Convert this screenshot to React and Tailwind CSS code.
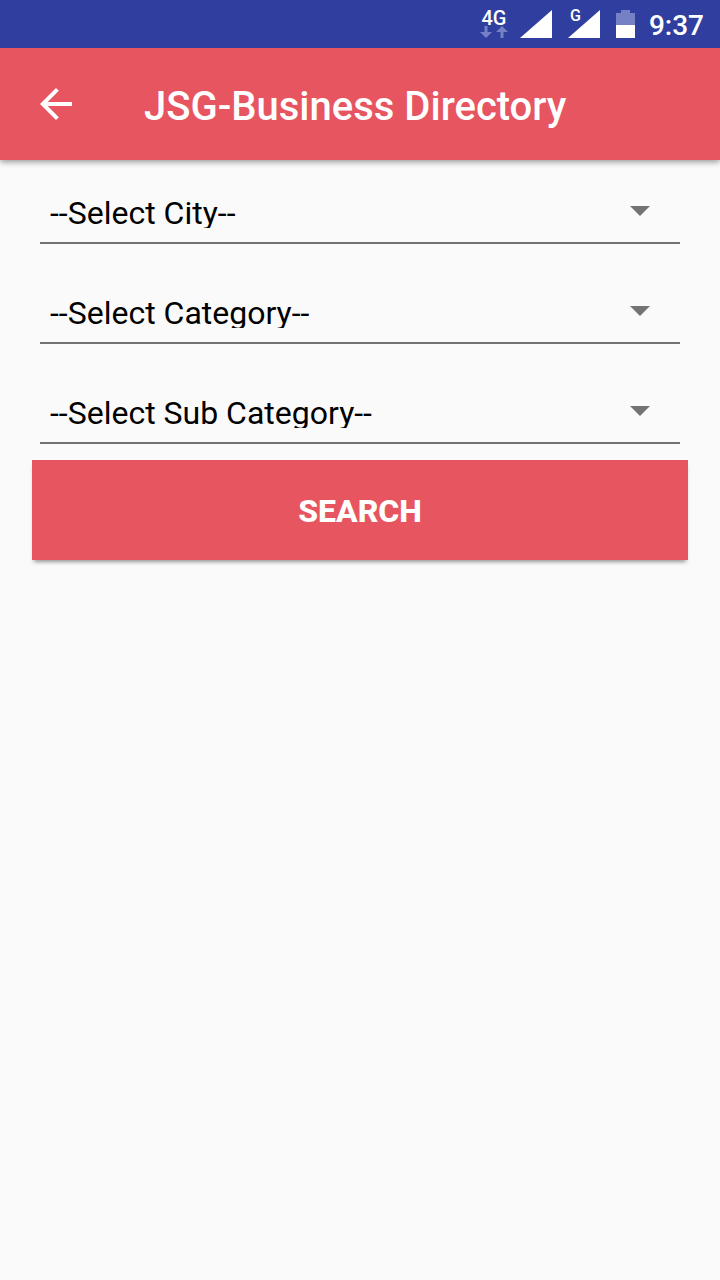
import React, { useState } from "react";

const FIELDS = [
  { id: "city", label: "City", placeholder: "--Select City--" },
  { id: "category", label: "Category", placeholder: "--Select Category--" },
  { id: "subCategory", label: "Sub category", placeholder: "--Select Sub Category--" },
];

function SignalIcon() {
  return (
    <svg className="h-7 w-8" viewBox="0 0 32 28" fill="white" aria-hidden="true">
      <path d="M32 0v28H0z" />
    </svg>
  );
}

function DataArrows() {
  return (
    <svg className="h-3 w-7" viewBox="0 0 28 12" fill="#7680c4" aria-hidden="true">
      <path d="M4.500 0h3v6H12L6 12 0 6h4.500z" />
      <path d="M20.500 12h3V6H28L22 0l-6 6h4.500z" />
    </svg>
  );
}

function BatteryIcon() {
  return (
    <svg className="h-7 w-[19px]" viewBox="0 0 19 28" aria-hidden="true">
      <path d="M5 0h9v3h5v12H0V3h5z" fill="#7680c4" />
      <path d="M0 15h19v13H0z" fill="white" />
    </svg>
  );
}

function StatusBar() {
  return (
    <div className="relative z-10 flex h-12 items-center justify-end bg-[#303f9f] pr-4 font-medium text-white">
      <div className="mr-3 flex flex-col items-center">
        <span className="text-xl leading-4">4G</span>
        <DataArrows />
      </div>
      <SignalIcon />
      <div className="relative mx-4">
        <SignalIcon />
        <span className="absolute top-0 left-0.5 text-base leading-3">G</span>
      </div>
      <BatteryIcon />
      <span className="ml-3.5 pt-1 text-[28px] leading-8">9:37</span>
    </div>
  );
}

function AppBar() {
  return (
    <header className="relative flex h-28 items-center bg-[#e75560] px-8 text-white shadow-[0_2px_6px_rgba(0,0,0,0.4)]">
      <button type="button" aria-label="Back" className="flex size-12 items-center justify-center">
        <svg className="size-8" viewBox="4 4 16 16" fill="currentColor">
          <path d="M20 11H7.830l5.590-5.590L12 4l-8 8 8 8 1.410-1.410L7.830 13H20v-2z" />
        </svg>
      </button>
      <h1 className="ml-16 pt-1.5 text-[40px] leading-12 font-medium">JSG-Business Directory</h1>
    </header>
  );
}

function SelectField({ id, label, placeholder, value, onChange }) {
  return (
    <div className="relative mx-2">
      <label htmlFor={id} className="sr-only">
        {label}
      </label>
      <select
        id={id}
        value={value}
        onChange={(e) => onChange(e.target.value)}
        className="block h-[60px] w-full appearance-none border-b-2 border-[#737373] pt-[14px] pr-14 pb-[14px] pl-[10px] text-[32px] leading-[30px] text-black focus:outline-none"
      >
        <option value="">{placeholder}</option>
      </select>
      <svg
        className="pointer-events-none absolute top-[22px] right-[30px] h-[10px] w-5"
        viewBox="0 0 20 10"
        fill="#737373"
        aria-hidden="true"
      >
        <path d="M0 0h20L10 10z" />
      </svg>
    </div>
  );
}

function App() {
  const [values, setValues] = useState({ city: "", category: "", subCategory: "" });

  return (
    <div className="min-h-screen bg-[#fafafa] font-[Roboto,sans-serif]">
      <StatusBar />
      <AppBar />
      <form className="px-8 pt-6" onSubmit={(e) => e.preventDefault()}>
        <div className="flex flex-col gap-10">
          {FIELDS.map((field) => (
            <SelectField
              key={field.id}
              {...field}
              value={values[field.id]}
              onChange={(value) => setValues({ ...values, [field.id]: value })}
            />
          ))}
        </div>
        <button
          type="submit"
          className="mt-4 h-[100px] w-full bg-[#e75560] pt-0.5 text-[32px] leading-10 font-extrabold text-white shadow-[0_4px_4px_-2px_rgba(0,0,0,0.4)]"
        >
          SEARCH
        </button>
      </form>
    </div>
  );
}

export default App;
